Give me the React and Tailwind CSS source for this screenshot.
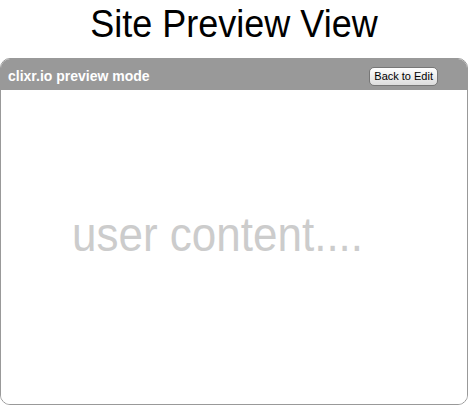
export default function App() {
  return (
    <div className="w-[468px] h-[406px] bg-white flex flex-col font-['Liberation_Sans',Arial,sans-serif]">
      <h1 className="text-center text-[36px] leading-[40px] text-black pt-[4px] h-[58px]">
        <span className="inline-block scale-y-[1.1]">Site Preview View</span>
      </h1>
      <div className="flex-1 flex flex-col rounded-[10px] border border-[#999] overflow-hidden mb-[1px]">
        <div className="h-[31px] bg-[#999] flex items-center justify-between pl-[7px] pr-[29px] pt-[3px]">
          <span className="text-white font-bold text-[14px]">clixr.io preview mode</span>
          <button className="h-[19px] px-[4px] text-[11px] text-black rounded-[5px] border border-[#777] bg-gradient-to-b from-white to-[#ddd] leading-none">
            Back to Edit
          </button>
        </div>
        <div className="flex-1 bg-white pl-[71px] pt-[119px]">
          <span className="inline-block text-[44px] leading-[50px] text-[#ccc] scale-y-[1.1]">user content....</span>
        </div>
      </div>
    </div>
  )
}
